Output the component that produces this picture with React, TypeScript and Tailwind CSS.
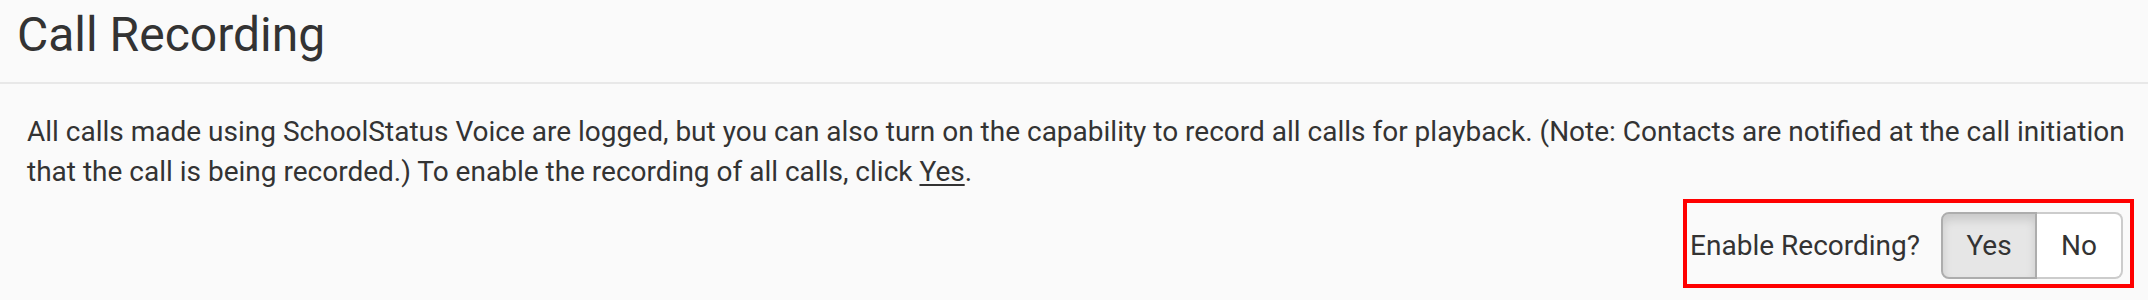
export default function App() {
  return (
    <div className="w-full h-[300px] bg-[#fafafa] text-[#333] font-['Roboto',sans-serif]">

      {/* Header */}

      <div className="pl-[17px] pt-[7px] pb-[19px] border-b-2 border-[#e8e8e8]">
        <h2 className="text-[48px] leading-[56px] font-normal">
          Call Recording
        </h2>
      </div>

      {/* Description */}

      <p className="pl-[27px] pr-[8px] pt-[28px] text-[28px] leading-[40px]">
        All calls made using SchoolStatus Voice are logged, but you can also turn on the capability to record all calls for playback. (Note: Contacts are notified at the call initiation that the call is being recorded.) To enable the recording of all calls, click{" "}
        <span className="underline underline-offset-[3px]">Yes</span>.
      </p>

      {/* Toggle */}

      <div className="flex justify-end pr-[14px] mt-[7px]">
        <div className="flex items-center border-4 border-[#ff0000] pl-[3px] pr-[7px] pt-[9px] pb-[5px]">

          <span className="text-[28px] leading-[40px] mr-[21px]">
            Enable Recording?
          </span>

          <div className="flex">
            <button className="w-[96px] h-[67px] flex items-center justify-center text-[28px] text-[#333] bg-[#e6e6e6] border-2 border-[#adadad] rounded-l-[8px] shadow-[inset_0_6px_10px_rgba(0,0,0,0.125)]">
              Yes
            </button>
            <button className="w-[86px] h-[67px] flex items-center justify-center text-[28px] text-[#333] bg-white border-y-2 border-r-2 border-[#ccc] rounded-r-[8px]">
              No
            </button>
          </div>

        </div>
      </div>

    </div>
  );
}
